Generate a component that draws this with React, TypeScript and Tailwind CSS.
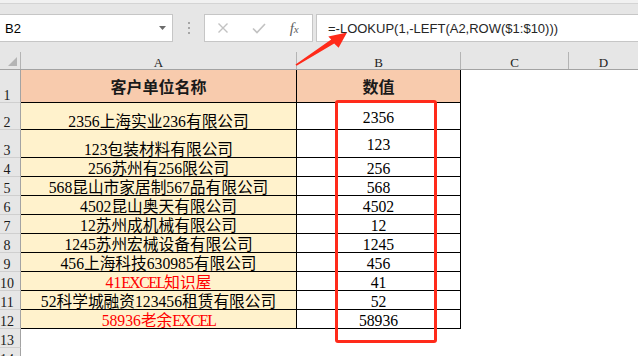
import React from "react";

type Row = {
  n: number;
  h: string;
  a?: string;
  b?: string;
  red?: boolean;
  header?: boolean;
  grid?: boolean;
};

const rows: Row[] = [
  { n: 1, h: "h-[33px]", header: true, grid: true },
  { n: 2, h: "h-[27px]", a: "2356上海实业236有限公司", b: "2356", grid: true },
  { n: 3, h: "h-[28px]", a: "123包装材料有限公司", b: "123", grid: true },
  { n: 4, h: "h-[19px]", a: "256苏州有256限公司", b: "256", grid: true },
  { n: 5, h: "h-[19px]", a: "568昆山市家居制567品有限公司", b: "568", grid: true },
  { n: 6, h: "h-[19px]", a: "4502昆山奥天有限公司", b: "4502", grid: true },
  { n: 7, h: "h-[19px]", a: "12苏州成机械有限公司", b: "12", grid: true },
  { n: 8, h: "h-[19px]", a: "1245苏州宏械设备有限公司", b: "1245", grid: true },
  { n: 9, h: "h-[19px]", a: "456上海科技630985有限公司", b: "456", grid: true },
  { n: 10, h: "h-[19px]", a: "41EXCEL知识屋", b: "41", red: true, grid: true },
  { n: 11, h: "h-[19px]", a: "52科学城融资123456租赁有限公司", b: "52", grid: true },
  { n: 12, h: "h-[19px]", a: "58936老余EXCEL", b: "58936", red: true, grid: true },
  { n: 13, h: "h-[19px]" },
  { n: 14, h: "h-[19px]" },
];

function Mixed({ text }: { text: string }) {
  const parts = text.match(/[A-Za-z]+|[^A-Za-z]+/g) || [];
  return (
    <>
      {parts.map((p, i) =>
        /[A-Za-z]/.test(p) ? (
          <span key={i} className="tracking-[-1.5px]">
            {p}
          </span>
        ) : (
          <span key={i}>{p}</span>
        )
      )}
    </>
  );
}

export default function App() {
  return (
    <div className="relative w-[638px] h-[356px] overflow-hidden bg-white font-['Liberation_Sans',sans-serif]">
      {/* toolbar / formula bar */}
      <div className="h-[52px] bg-[#e6e6e6] flex flex-col">
        <div className="h-[4px] bg-[#f1f1f1] border-b border-[#d4d4d4]" />
        <div className="mt-[10px] h-[28px] flex">
          <div className="w-[173px] h-full bg-white border-y border-r border-[#c6c6c6] flex items-center pl-[5px] pr-[6px]">
            <span className="flex-1 text-[13px] leading-none text-black">B2</span>
            <svg width="7" height="4" viewBox="0 0 7 4">
              <polygon points="0,0 7,0 3.5,4" fill="#6b6b6b" />
            </svg>
          </div>
          <div className="w-[31px] flex flex-col items-center justify-center gap-[3px]">
            <div className="w-[2px] h-[2px] bg-[#a6a6a6]" />
            <div className="w-[2px] h-[2px] bg-[#a6a6a6]" />
            <div className="w-[2px] h-[2px] bg-[#a6a6a6]" />
          </div>
          <div className="w-[109px] h-full bg-white border border-[#c6c6c6] flex">
            <div className="flex-1 flex items-center justify-center">
              <svg width="12" height="12" viewBox="0 0 12 12">
                <path d="M1.5 1.5 L10.5 10.5 M10.5 1.5 L1.5 10.5" stroke="#c2c2c2" strokeWidth="1.4" />
              </svg>
            </div>
            <div className="flex-1 flex items-center justify-center">
              <svg width="14" height="11" viewBox="0 0 14 11">
                <path d="M1 5.5 L5 9.5 L13 1" stroke="#c2c2c2" strokeWidth="1.6" fill="none" />
              </svg>
            </div>
            <div className="flex-1 flex items-center justify-center">
              <span className="font-['Liberation_Serif',serif] italic text-[#5f5f5f] text-[15px] leading-none">
                f<span className="text-[11px]">x</span>
              </span>
            </div>
          </div>
          <div className="ml-[3px] flex-1 h-full bg-white border-y border-l border-[#c6c6c6] flex items-center pl-[11px]">
            <span className="text-[13px] leading-none text-[#262626]">=-LOOKUP(1,-LEFT(A2,ROW($1:$10)))</span>
          </div>
        </div>
      </div>

      {/* column headers */}
      <div className="h-[18px] flex bg-[#e6e6e6] border-b border-[#a3a3a3] font-['Liberation_Serif',serif] text-[13px] leading-[13px] text-[#222]">
        <div className="w-[21px] shrink-0 border-r border-[#b4b4b4] relative">
          <svg className="absolute left-[8px] top-[5px]" width="9" height="9" viewBox="0 0 9 9">
            <polygon points="9,0 9,9 0,9" fill="#b4b4b4" />
          </svg>
        </div>
        <div className="w-[276px] shrink-0 border-r border-[#b4b4b4] flex items-center justify-center pt-[4px]">A</div>
        <div className="w-[164px] shrink-0 border-r border-[#b4b4b4] flex items-center justify-center pt-[4px]">B</div>
        <div className="w-[108px] shrink-0 border-r border-[#b4b4b4] flex items-center justify-center pt-[4px]">C</div>
        <div className="flex-1 flex items-center justify-center pt-[4px]">D</div>
      </div>

      {/* rows */}
      {rows.map((r) => (
        <div key={r.n} className={`flex ${r.h}`}>
          <div className="w-[21px] shrink-0 bg-[#e6e6e6] border-r border-r-[#a3a3a3] border-b border-b-[#cfcfcf] flex items-end">
            <div className="w-[14px] flex justify-center font-['Liberation_Serif',serif] text-[14px] leading-[13px] text-[#1a1a1a]">
              {r.n}
            </div>
          </div>
          {r.header ? (
            <>
              <div className="w-[276px] shrink-0 bg-[#f8cbad] border-r border-b border-black flex items-center justify-center font-['Noto_Sans_CJK_SC',sans-serif] font-bold text-[16px] leading-[16px] text-[#1a1a1a]">
                客户单位名称
              </div>
              <div className="w-[164px] shrink-0 bg-[#f8cbad] border-r border-b border-black flex items-center justify-center font-['Noto_Sans_CJK_SC',sans-serif] font-bold text-[16px] leading-[16px] text-[#1a1a1a]">
                数值
              </div>
            </>
          ) : r.grid ? (
            <>
              <div
                className={`w-[276px] shrink-0 bg-[#fff2cc] border-r border-b border-black flex items-end justify-center font-['Liberation_Serif','Noto_Sans_CJK_SC',serif] text-[15.7px] leading-[14px] whitespace-nowrap ${
                  r.red ? "text-[#ff0000]" : "text-black"
                }`}
              >
                <div>
                  <Mixed text={r.a || ""} />
                </div>
              </div>
              <div className="w-[164px] shrink-0 bg-white border-r border-b border-black flex items-center justify-center pt-[3px] font-['Liberation_Serif',serif] text-[15.7px] leading-[14px] text-black">
                {r.b}
              </div>
            </>
          ) : (
            <>
              <div className="w-[276px] shrink-0" />
              <div className="w-[164px] shrink-0" />
            </>
          )}
          <div className="w-[108px] shrink-0" />
          <div className="flex-1" />
        </div>
      ))}

      {/* red highlight box */}
      <div className="absolute left-[335px] top-[100px] w-[102px] h-[243px] border-[3px] border-[#ff2a1a] rounded-[3px] pointer-events-none" />

      {/* red arrow */}
      <svg className="absolute left-0 top-0 pointer-events-none" width="638" height="356" viewBox="0 0 638 356">
        <polygon
          points="295.5,64.6 331.2,39.4 328.3,36.4 347,32.5 338.6,47.8 334.2,43.6 296.6,65.8"
          fill="#ff2a1a"
        />
      </svg>
    </div>
  );
}
